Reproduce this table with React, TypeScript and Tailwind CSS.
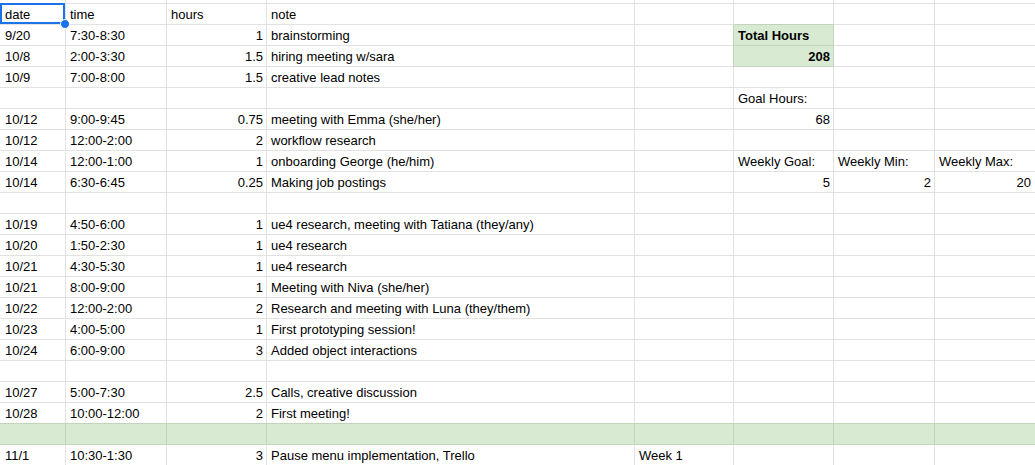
const COLS = 8;

// one row per spreadsheet line; "" = empty cell
const rows: string[][] = [
  ["date", "time", "hours", "note", "", "", "", ""],
  ["9/20", "7:30-8:30", "1", "brainstorming", "", "Total Hours", "", ""],
  ["10/8", "2:00-3:30", "1.5", "hiring meeting w/sara", "", "208", "", ""],
  ["10/9", "7:00-8:00", "1.5", "creative lead notes", "", "", "", ""],
  ["", "", "", "", "", "Goal Hours:", "", ""],
  ["10/12", "9:00-9:45", "0.75", "meeting with Emma (she/her)", "", "68", "", ""],
  ["10/12", "12:00-2:00", "2", "workflow research", "", "", "", ""],
  ["10/14", "12:00-1:00", "1", "onboarding George (he/him)", "", "Weekly Goal:", "Weekly Min:", "Weekly Max:"],
  ["10/14", "6:30-6:45", "0.25", "Making job postings", "", "5", "2", "20"],
  ["", "", "", "", "", "", "", ""],
  ["10/19", "4:50-6:00", "1", "ue4 research, meeting with Tatiana (they/any)", "", "", "", ""],
  ["10/20", "1:50-2:30", "1", "ue4 research", "", "", "", ""],
  ["10/21", "4:30-5:30", "1", "ue4 research", "", "", "", ""],
  ["10/21", "8:00-9:00", "1", "Meeting with Niva (she/her)", "", "", "", ""],
  ["10/22", "12:00-2:00", "2", "Research and meeting with Luna (they/them)", "", "", "", ""],
  ["10/23", "4:00-5:00", "1", "First prototyping session!", "", "", "", ""],
  ["10/24", "6:00-9:00", "3", "Added object interactions", "", "", "", ""],
  ["", "", "", "", "", "", "", ""],
  ["10/27", "5:00-7:30", "2.5", "Calls, creative discussion", "", "", "", ""],
  ["10/28", "10:00-12:00", "2", "First meeting!", "", "", "", ""],
  ["", "", "", "", "", "", "", ""],
  ["11/1", "10:30-1:30", "3", "Pause menu implementation, Trello", "Week 1", "", "", ""],
];

function isGreen(r: number, c: number) {
  if (r === 20) return true;
  return c === 5 && (r === 1 || r === 2);
}

function isNum(v: string) {
  return /^\d+(\.\d+)?$/.test(v);
}

export default function App() {
  return (
    <div className="w-[1035px] h-[465px] overflow-hidden bg-white font-['Liberation_Sans',Arial,sans-serif] text-[13px] leading-5 text-black">
      <div className="grid grid-cols-[66px_101px_100px_368px_99px_100px_101px_104px]">
        {/* partial row scrolled off the top */}
        {Array.from({ length: COLS }).map((_, c) => (
          <div key={"top" + c} className="h-[4px] border-r border-b border-[#e2e2e2]" />
        ))}

        {rows.map((row, r) =>
          row.map((v, c) => {
            const green = isGreen(r, c);
            const bold = c === 5 && (r === 1 || r === 2);
            return (
              <div
                key={r + "-" + c}
                className={
                  "relative h-[21px] pt-px border-r border-b whitespace-nowrap " +
                  (c === 0 ? "pl-[5px] " : "pl-[4px] ") +
                  (c === 7 ? "pr-[7px] " : "pr-[3px] ") +
                  (isNum(v) ? "text-right " : "") +
                  (bold ? "font-bold " : "") +
                  (green
                    ? "bg-[#d9ead3] border-[#c2d4bb] shadow-[0_-1px_0_#c2d4bb,-1px_0_0_#c2d4bb] "
                    : "border-[#e2e2e2] ")
                }
              >
                {v}
                {r === 0 && c === 0 && (
                  <>
                    <div className="absolute -top-px left-0 right-0 bottom-0 border-2 border-[#1a73e8]" />
                    <div className="absolute z-10 -right-[5px] -bottom-[5px] w-[10px] h-[10px] rounded-full bg-[#1a73e8] border border-white" />
                  </>
                )}
              </div>
            );
          })
        )}
      </div>
    </div>
  );
}
